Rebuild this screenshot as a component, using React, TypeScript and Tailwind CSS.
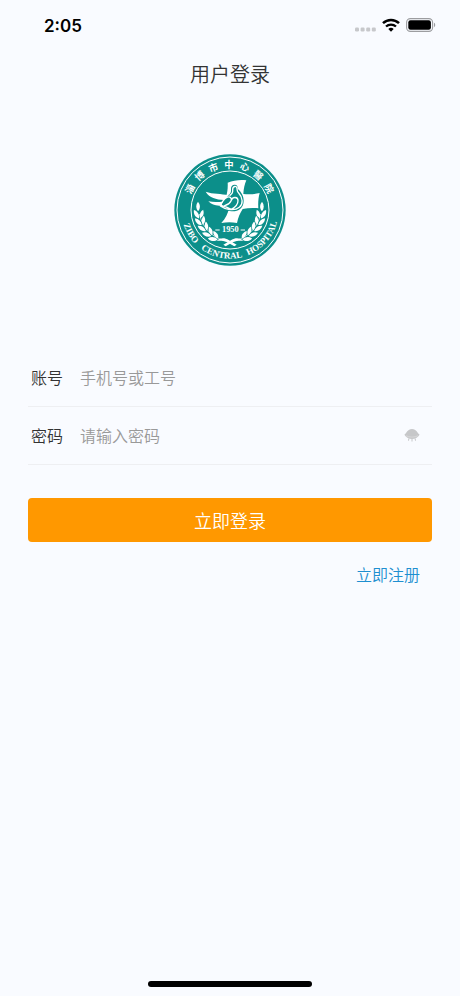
import React, { useState } from "react";

interface FieldProps {
  id: string;
  label: string;
  placeholder: string;
  type?: string;
  autoComplete?: string;
  children?: React.ReactNode;
}

const sealChars = [
  { char: "淄", x: 48, y: 105, angle: -62 },
  { char: "博", x: 77, y: 66, angle: -42 },
  { char: "市", x: 118, y: 41, angle: -21 },
  { char: "中", x: 165, y: 33, angle: 0 },
  { char: "心", x: 212, y: 39, angle: 20 },
  { char: "醫", x: 253, y: 64, angle: 40 },
  { char: "院", x: 285, y: 103, angle: 61 },
];

const sealWords = [
  { word: "ZIBO", offset: "17%" },
  { word: "CENTRAL", offset: "44%" },
  { word: "HOSPITAL", offset: "77%" },
];

// degrees round the inner ring, starting at the bottom of the seal
const leafAngles = [24, 37, 50, 63, 76];

const StatusBar = () => (
  <div className="flex h-[50px] items-center justify-between pl-11 pr-6">
    <span className="pt-0.5 font-['Inter',sans-serif] text-[17px] font-semibold leading-5 text-black">
      2:05
    </span>
    <div className="flex items-center gap-1.5">
      <svg viewBox="0 0 21 5" className="mt-2 h-[5px] w-[21px]" fill="#c7c8cb" aria-hidden="true">
        {[0, 5.6, 11.2, 16.8].map((x) => (
          <rect key={x} x={x} y="0.5" width="4" height="4" rx="1.2" />
        ))}
      </svg>
      <svg viewBox="0 0 18 14" className="h-3.5 w-[18px]" fill="none" stroke="#000" aria-hidden="true">
        <path d="M1 5.2a11.6 11.6 0 0 1 16 0" strokeWidth="2.5" />
        <path d="M4 8.5a7.4 7.4 0 0 1 10 0" strokeWidth="2.3" />
        <path d="M6.3 11a4 4 0 0 1 5.4 0L9 13.7z" fill="#000" stroke="none" />
      </svg>
      <svg viewBox="0 0 30 14" className="h-3.5 w-[30px]" aria-hidden="true">
        <rect x="0.6" y="0.6" width="26" height="12.8" rx="3.8" fill="none" stroke="#9c9da0" strokeWidth="1.1" />
        <rect x="2.3" y="2.3" width="22.6" height="9.4" rx="2.2" fill="#000" />
        <path d="M28 4.8c1.6.5 1.6 3.9 0 4.4z" fill="#9c9da0" />
      </svg>
    </div>
  </div>
);

const LaurelBranch = () => (
  <g fill="#fff">
    <path d="M166 262C125 258 88 230 76 180" fill="none" stroke="#fff" strokeWidth="2" />
    {leafAngles.map((angle) => (
      <g key={angle} transform={`rotate(${angle} 168 168)`}>
        <path d="M170 261c-1-10-10-16-22-15 3 10 12 15 22 15z" />
        <path d="M170 264c-5 10-16 14-28 9 7-10 16-13 28-9z" />
      </g>
    ))}
    <path d="M72 172c-7-9-7-20 0-29 7 9 8 20 0 29z" />
    <path d="M128 260c10-9 24-10 36-2l24 14-7 5-23-13c-9-5-20-4-30-4z" />
  </g>
);

const HospitalSeal = () => (
  <svg viewBox="0 0 336 336" className="size-28" role="img" aria-label="淄博市中心醫院">
    <defs>
      <path id="seal-arc" d="M22 168A146 146 0 0 0 314 168" />
    </defs>
    <circle cx="168" cy="168" r="167" fill="#0c8f8a" />
    <circle cx="168" cy="168" r="159" fill="none" stroke="#fff" strokeWidth="3" />
    <circle cx="168" cy="168" r="117" fill="none" stroke="#fff" strokeWidth="3" />

    {sealChars.map(({ char, x, y, angle }) => (
      <text
        key={char}
        transform={`translate(${x} ${y}) rotate(${angle})`}
        y="10"
        textAnchor="middle"
        fill="#fff"
        className="font-['Noto_Sans_CJK_TC',sans-serif] text-[28px] font-bold"
      >
        {char}
      </text>
    ))}
    {sealWords.map(({ word, offset }) => (
      <text
        key={word}
        fill="#fff"
        textAnchor="middle"
        className="font-['Liberation_Serif',serif] text-[27px] font-bold"
      >
        <textPath href="#seal-arc" startOffset={offset}>
          {word}
        </textPath>
      </text>
    ))}

    {/* cross */}
    <path
      d="M161 86c18-7 36-9 56-7-5 12-8 25-9 41 17 2 33 1 49-3-4 14-5 30-4 46-17-2-32-1-47 2-8 13-14 26-17 42-15-3-31-3-47 0 13-14 20-28 23-45l-8-36c3-11 5-25 4-40z"
      fill="#fff"
    />
    {/* dove */}
    <path
      d="M94 116c20 8 44 4 68 8 8-3 10-11 9-18-1-9 4-14 11-14 7 0 10 5 9 12 11 9 18 22 18 36 0 22-16 33-36 32-18-1-32-7-44-18-12-3-20-8-28-17l12-2c-11-5-17-9-19-19z"
      fill="#0c8f8a"
    />
    <path d="M95 113c22 8 46 5 70 11-6 4-11 9-15 14-24-2-43-6-55-25z" fill="#fff" />
    <path d="M103 142c15 3 29 2 44 1-3 4-5 8-7 12-16 1-27-3-37-13z" fill="#fff" />
    <path
      d="M168 124c8-5 9-9 8-17 0-11 12-13 13-4 1 6-1 8 5 14 13 14 14 33 2 43-16 13-43 6-57-4M158 130c-9 7-15 15-17 24 12 3 22 7 31 12M156 132c12-8 19 1 15 9-4 8-11 12-19 14M172 139c4-12 20-11 20 1 0 12-9 20-20 26"
      fill="none"
      stroke="#fff"
      strokeWidth="4"
      strokeLinecap="round"
      strokeLinejoin="round"
    />

    <LaurelBranch />
    <g transform="translate(336 0) scale(-1 1)">
      <LaurelBranch />
    </g>
    <path d="M124 228h13M200 228h13" stroke="#fff" strokeWidth="3" />
    <text x="169" y="235" textAnchor="middle" fill="#fff" className="font-['Liberation_Serif',serif] text-[25px] font-bold">
      1950
    </text>
  </svg>
);

const ClosedEye = () => (
  <svg viewBox="0 0 16 14" className="h-3.5 w-4" fill="#c6c7c9" aria-hidden="true">
    <path d="M0.4 6.8C2.6 5.2 3.4 1 8 1s5.4 4.2 7.6 5.8C13.6 9.8 11 11 8 11S2.4 9.8.4 6.8z" />
    <path d="M2 7.8c3.5 1.7 8.5 1.7 12 0" fill="none" stroke="#e6e7e9" strokeWidth="0.5" />
    <path d="M4.9 10.4l-.4 2.3M8 10.8v2.7M11.1 10.400l.4 2.300" fill="none" stroke="#c6c7c9" strokeWidth="1" />
  </svg>
);

const Field: React.FC<FieldProps> = ({ id, label, placeholder, type = "text", autoComplete, children }) => (
  <div className="flex h-[58px] items-center border-b border-[#eeeff2] pb-0.5 pl-[3px] pr-3">
    <label htmlFor={id} className="w-[49px] shrink-0 text-[#333333]">
      {label}
    </label>
    <input
      id={id}
      type={type}
      placeholder={placeholder}
      autoComplete={autoComplete}
      className="min-w-0 flex-1 bg-transparent text-[#333333] outline-none placeholder:text-[#999999]"
    />
    {children}
  </div>
);

const App: React.FC = () => {
  const [showPassword, setShowPassword] = useState(false);

  return (
    <div className="flex min-h-screen flex-col bg-[#f9fbff] font-['Noto_Sans_CJK_SC',sans-serif] text-base font-[350]">
      <StatusBar />

      <header className="flex h-12 items-center justify-center">
        <h1 className="text-xl text-[#333333]">用户登录</h1>
      </header>

      <main className="px-7">
        <div className="flex justify-center pt-14">
          <HospitalSeal />
        </div>

        <form className="mt-[83px]" onSubmit={(e) => e.preventDefault()}>
          <Field id="account" label="账号" placeholder="手机号或工号" autoComplete="username" />
          <Field
            id="password"
            label="密码"
            placeholder="请输入密码"
            type={showPassword ? "text" : "password"}
            autoComplete="current-password"
          >
            <button
              type="button"
              aria-label="显示密码"
              aria-pressed={showPassword}
              onClick={() => setShowPassword(!showPassword)}
            >
              <ClosedEye />
            </button>
          </Field>

          <button
            type="submit"
            className="mt-[33px] h-11 w-full rounded bg-[#ff9800] text-lg text-white"
          >
            立即登录
          </button>
        </form>

        <div className="mt-5 flex justify-end pr-3">
          <a href="#register" className="text-[#1e8fd0]">
            立即注册
          </a>
        </div>
      </main>

      <div className="mt-auto flex justify-center pb-[9px]">
        <div className="h-1.5 w-[164px] rounded-full bg-black" />
      </div>
    </div>
  );
};

export default App;
